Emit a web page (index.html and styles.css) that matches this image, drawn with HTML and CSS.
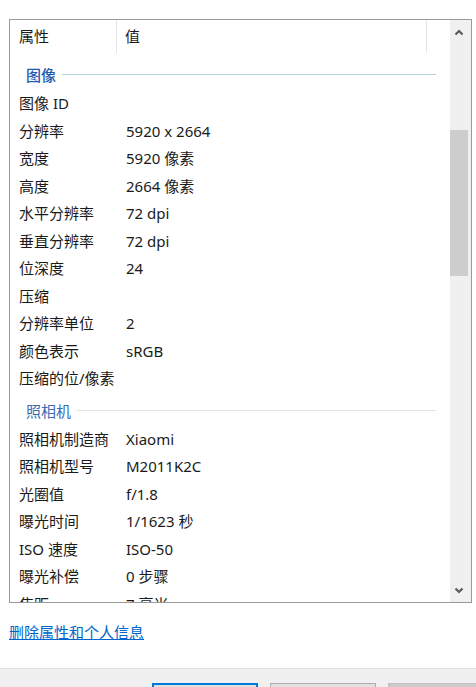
FILE: index.html
```
<!DOCTYPE html>
<html lang="zh-CN">
<head>
    <meta charset="UTF-8">
    <meta name="viewport" content="width=device-width, initial-scale=1.0">
    <title>属性 - 详细信息</title>
    <link rel="stylesheet" href="styles.css">
</head>
<body>
    <div class="dialog">
        <div class="prop-list">
            <div class="list-body">
                <div class="list-header">
                    <div class="col-name">属性</div>
                    <div class="col-value">值</div>
                    <div class="col-rest"></div>
                </div>

                <div class="group group-active"><span>图像</span><i class="group-line"></i></div>
                <div class="row"><span class="name">图像 ID</span><span class="value"></span></div>
                <div class="row"><span class="name">分辨率</span><span class="value">5920 x 2664</span></div>
                <div class="row"><span class="name">宽度</span><span class="value">5920 像素</span></div>
                <div class="row"><span class="name">高度</span><span class="value">2664 像素</span></div>
                <div class="row"><span class="name">水平分辨率</span><span class="value">72 dpi</span></div>
                <div class="row"><span class="name">垂直分辨率</span><span class="value">72 dpi</span></div>
                <div class="row"><span class="name">位深度</span><span class="value">24</span></div>
                <div class="row"><span class="name">压缩</span><span class="value"></span></div>
                <div class="row"><span class="name">分辨率单位</span><span class="value">2</span></div>
                <div class="row"><span class="name">颜色表示</span><span class="value">sRGB</span></div>
                <div class="row"><span class="name">压缩的位/像素</span><span class="value"></span></div>

                <div class="group"><span>照相机</span><i class="group-line"></i></div>
                <div class="row"><span class="name">照相机制造商</span><span class="value">Xiaomi</span></div>
                <div class="row"><span class="name">照相机型号</span><span class="value">M2011K2C</span></div>
                <div class="row"><span class="name">光圈值</span><span class="value">f/1.8</span></div>
                <div class="row"><span class="name">曝光时间</span><span class="value">1/1623 秒</span></div>
                <div class="row"><span class="name">ISO 速度</span><span class="value">ISO-50</span></div>
                <div class="row"><span class="name">曝光补偿</span><span class="value">0 步骤</span></div>
                <div class="row"><span class="name">焦距</span><span class="value">7 毫米</span></div>
            </div>

            <div class="scrollbar">
                <div class="sb-btn">
                    <svg width="10" height="7" viewBox="0 0 10 7"><polyline points="1.5,5.5 5,2 8.5,5.5" fill="none" stroke="#5a5a5a" stroke-width="2.2"/></svg>
                </div>
                <div class="sb-track"><div class="sb-thumb"></div></div>
                <div class="sb-btn">
                    <svg width="10" height="7" viewBox="0 0 10 7"><polyline points="1.5,1.5 5,5 8.5,1.5" fill="none" stroke="#5a5a5a" stroke-width="2.2"/></svg>
                </div>
            </div>
        </div>

        <div class="link-area">
            <a href="#" class="remove-link">删除属性和个人信息</a>
        </div>

        <div class="footer">
            <button class="btn btn-default"></button>
            <button class="btn"></button>
            <button class="btn btn-disabled"></button>
        </div>
    </div>
</body>
</html>
```

FILE: styles.css
```
html, body {
    margin: 0;
    padding: 0;
    height: 687px;
    overflow: hidden;
    background: #ffffff;
}
body {
    font-family: "Noto Sans", "Noto Sans CJK SC", sans-serif;
    font-size: 15px;
    color: #1a1a1a;
}
.dialog {
    display: flex;
    flex-direction: column;
    padding-top: 19px;
}
.prop-list {
    display: flex;
    margin-left: 9px;
    width: 463px;
    height: 584px;
    box-sizing: border-box;
    border: 1px solid #9a9a9a;
    overflow: hidden;
}
.list-body {
    flex: 1;
    overflow: hidden;
}
.list-header {
    display: flex;
    height: 33px;
    margin-bottom: 4px;
    line-height: 33px;
}
.col-name {
    width: 107px;
    padding-left: 9px;
    box-sizing: border-box;
    border-right: 1px solid #e5e5e5;
}
.col-value {
    width: 310px;
    padding-left: 8px;
    box-sizing: border-box;
    border-right: 1px solid #e5e5e5;
}
.col-rest {
    flex: 1;
}
.group {
    display: flex;
    align-items: center;
    height: 33px;
    padding: 4px 14px 2px 16px;
    box-sizing: border-box;
    color: #3b6db5;
}
.group-active {
    color: #1e5bb0;
    font-weight: 500;
}
.group-line {
    flex: 1;
    height: 1px;
    margin-left: 6px;
    background: #e2e2e2;
}
.group-active .group-line {
    background: #b4d2dc;
}
.row {
    display: flex;
    height: 27.5px;
    line-height: 27.5px;
    white-space: nowrap;
}
.name {
    width: 116px;
    padding-left: 9px;
    box-sizing: border-box;
    flex-shrink: 0;
}
.value {
    flex: 1;
}
.scrollbar {
    width: 21px;
    display: flex;
    flex-direction: column;
    background: #f0f0f0;
}
.sb-btn {
    height: 24px;
    display: flex;
    align-items: center;
    justify-content: center;
    padding-right: 3px;
}
.sb-track {
    flex: 1;
    padding-top: 86px;
}
.sb-thumb {
    width: 18px;
    height: 146px;
    background: #cdcdcd;
}
.link-area {
    height: 65px;
    padding: 19px 0 0 9px;
    box-sizing: border-box;
    line-height: 20px;
}
.remove-link {
    color: #0066cc;
    text-decoration: underline;
}
.footer {
    display: flex;
    gap: 12px;
    height: 19px;
    padding: 14px 0 0 152px;
    box-sizing: border-box;
    border-top: 1px solid #dfdfdf;
    background: #f0f0f0;
    overflow: hidden;
}
.btn {
    flex-shrink: 0;
    width: 106px;
    height: 24px;
    background: #e1e1e1;
    border: 1px solid #adadad;
}
.btn-default {
    border: 2px solid #0078d7;
}
.btn-disabled {
    background: #cccccc;
    border-color: #bfbfbf;
}
```
